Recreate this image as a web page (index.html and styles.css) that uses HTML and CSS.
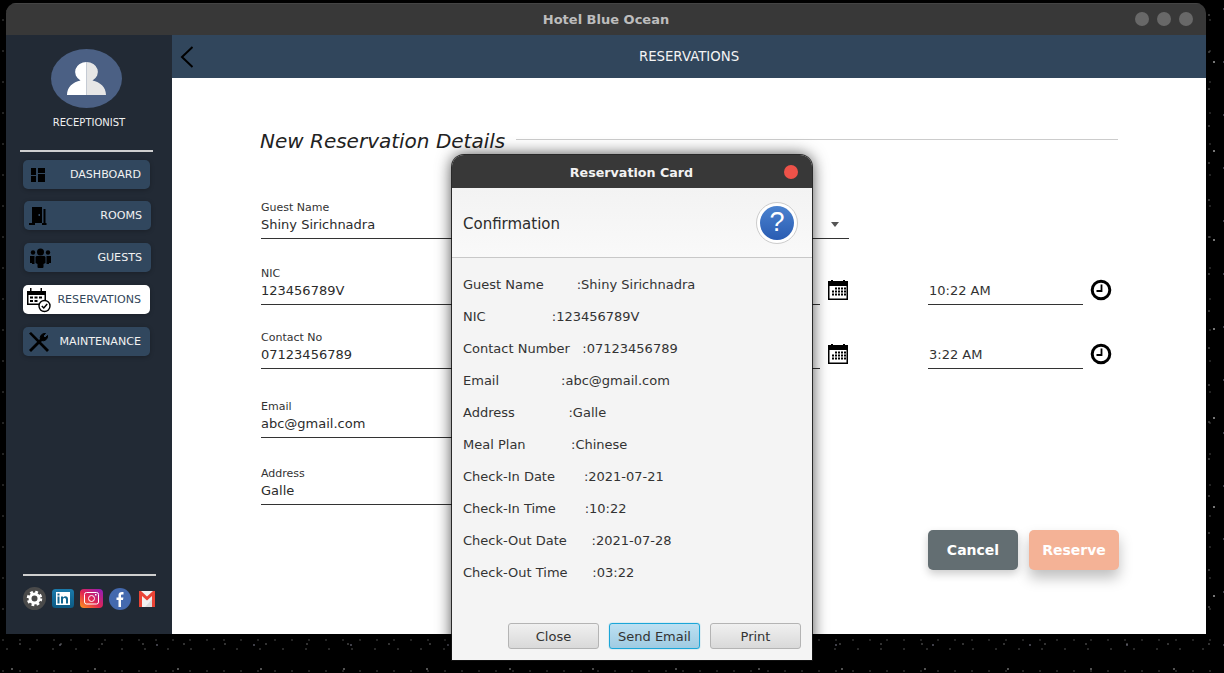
FILE: index.html
```html
<!doctype html>

<html>
  <head>
    <title>Hotel Blue Ocean</title>
    <link rel="stylesheet" href="styles.css">
  </head>

  <body>
    <div class="window">
      <div class="titlebar">
        <span class="titlebar-text">Hotel Blue Ocean</span>
        <div class="window-controls"><i></i><i></i><i></i></div>
      </div>

      <div class="app">
        <div class="sidebar">
          <svg class="avatar" viewBox="0 0 71 59">
            <ellipse cx="35.5" cy="29.5" rx="35.5" ry="29.5" fill="#4b6084"/>
            <path d="M35.500 13 a11.500 10 0 0 0 -6 18.500 C22 33 16 38 16 46 H35.500 Z" fill="#fff"/>
            <path d="M35.500 13 a11.500 10 0 0 1 6 18.500 C49 33 55 38 55 46 H35.500 Z" fill="#e6e6e6"/>
          </svg>
          <div class="role">RECEPTIONIST</div>
          <div class="side-rule"></div>

          <div class="nav">
            <div class="nav-item nav-dashboard">
              <svg width="16" height="16" viewBox="0 0 16 16"><path d="M1 1h5v7H1zM1 9h5v6H1zM8 1h7v5H8zM8 7h7v8H8z"/></svg>
              <span>DASHBOARD</span>
            </div>
            <div class="nav-item nav-shift">
              <svg width="18" height="20" viewBox="0 0 18 20"><path d="M3 1h10v16H3zM14.500 3h2v14h-2zM0 17h6v2H0zM13 17h4.500v2H13z"/><rect x="9.500" y="8" width="1.500" height="2" fill="#31475e"/></svg>
              <span>ROOMS</span>
            </div>
            <div class="nav-item nav-shift">
              <svg width="23" height="20" viewBox="0 0 23 20"><circle cx="11.500" cy="4" r="3.500"/><circle cx="4" cy="4.500" r="2.200"/><circle cx="19" cy="4.500" r="2.200"/><path d="M7.500 8h8l1 1v6l-2 1v3a1 1 0 0 1-1 1h-4a1 1 0 0 1-1-1v-3l-2-1V9zM1 8h4.500v8H3v-1H1zM17.500 8H22v7h-2v1h-2.500z"/></svg>
              <span>GUESTS</span>
            </div>
            <div class="nav-item nav-active">
              <svg width="24" height="26" viewBox="0 0 24 26">
                <path d="M0 4h3V1h1.500v3h9V1H15v3h4v14H0z"/>
                <path d="M1.500 8h16v8.500h-16z" fill="#fff"/>
                <path d="M3 9.500h3v2H3zM7.500 9.500h3v2h-3zM12 9.500h3v2h-3zM3 13h3v2H3zM7.500 13h3v2h-3z"/>
                <circle cx="17.500" cy="19" r="5.500" fill="#fff" stroke="#000" stroke-width="1.400"/>
                <path d="M14.800 19l2 2 3.400-4" fill="none" stroke="#000" stroke-width="1.500"/>
              </svg>
              <span>RESERVATIONS</span>
            </div>
            <div class="nav-item">
              <svg width="22" height="22" viewBox="0 0 22 22">
                <path d="M1 2.500l2-1.500 18 18-2 2z"/>
                <path d="M1 19l11.500-11.500 2 2L3 21z"/>
                <path d="M12.500 8.500a4.500 4.500 0 0 1 5-6l-2.500 2.500 2 2 2.500-2.500a4.500 4.500 0 0 1-6 5z" stroke="#000"/>
              </svg>
              <span>MAINTENANCE</span>
            </div>
          </div>

          <div class="side-foot">
            <div class="side-rule"></div>
            <div class="social">
              <svg width="23" height="23" viewBox="0 0 23 23">
                <circle cx="11.500" cy="11.500" r="11.500" fill="#4a4a4a"/>
                <circle cx="11.500" cy="11.500" r="4.500" fill="none" stroke="#fff" stroke-width="3"/>
                <circle cx="11.500" cy="11.500" r="6.500" fill="none" stroke="#fff" stroke-width="2.500" stroke-dasharray="2.700 2.400"/>
              </svg>
              <svg width="22" height="20" viewBox="0 0 22 20">
                <defs><linearGradient id="li" x1="0" y1="0" x2="0" y2="1"><stop offset="0" stop-color="#1b7bab"/><stop offset="1" stop-color="#0c5a84"/></linearGradient></defs>
                <rect width="22" height="19" rx="3.500" fill="url(#li)"/>
                <rect x="4" y="3" width="14" height="13" fill="#fff"/>
                <path d="M5.500 4.500h2v2h-2zM5.500 7.500h2v7h-2zM9 7.500h2v1c2-2 5-1.500 5 1.500v4.500h-2v-4c0-2-3-2-3 0v4H9z" fill="#12668f"/>
              </svg>
              <svg width="23" height="20" viewBox="0 0 23 20">
                <defs><linearGradient id="ig" x1="0" y1="1" x2="1" y2="0"><stop offset="0" stop-color="#fd9a1c"/><stop offset="0.45" stop-color="#e3264f"/><stop offset="1" stop-color="#8e1cc0"/></linearGradient></defs>
                <rect width="23" height="19" rx="4" fill="url(#ig)"/>
                <rect x="4.500" y="3.500" width="14" height="11.500" rx="2" fill="none" stroke="#fff"/>
                <circle cx="11.500" cy="9.500" r="3" fill="none" stroke="#fff"/>
                <rect x="15" y="5" width="1.500" height="1.500" fill="#fff"/>
              </svg>
              <svg class="social-fb" width="22" height="22" viewBox="0 0 22 22">
                <circle cx="11" cy="11" r="11" fill="#4469ae"/>
                <path d="M9.500 19v-7H7.500V9.500h2V7c0-2.500 2-3.500 5-3v2.500c-1.800-.3-2.500 0-2.500 1v2h2.400l-.4 2.500h-2v7z" fill="#fff"/>
              </svg>
              <svg width="16" height="16" viewBox="0 0 16 16">
                <rect width="16" height="16" fill="#f1f1f1"/>
                <path d="M16 5v11H6z" fill="#dcdcdc"/>
                <path d="M0 0h2l6 5.500L14 0h2v16h-3V5L8 9.500 3 5v11H0z" fill="#ea4335"/>
              </svg>
            </div>
          </div>
        </div>

        <div class="content">
          <div class="header">
            <svg class="back" width="14" height="22" viewBox="0 0 14 22"><path d="M12.500 1L2 11l10.500 10" fill="none" stroke="#000" stroke-width="2"/></svg>
            <span>RESERVATIONS</span>
          </div>

          <div class="main">
            <div class="section-title">
              <h2>New Reservation Details</h2>
              <div class="section-line"></div>
            </div>

            <div class="form-row">
              <div class="field"><label>Guest Name</label><div class="value">Shiny Sirichnadra</div></div>
              <div class="combo"><b class="arrow"></b></div>
            </div>

            <div class="form-row row-nic">
              <div class="field"><label>NIC</label><div class="value">123456789V</div></div>
              <div class="date-line"></div>
              <svg class="calendar" width="20" height="20" viewBox="0 0 20 20"><path d="M0 1h3V0h2v1h10V0h2v1h3v19H0z"/><path d="M1.500 6h17v12.500h-17z" fill="#fff"/><path d="M7 7.500h2v2H7zM10 7.500h2v2h-2zM13 7.500h2v2h-2zM16 7.500h2v2h-2zM4 10.500h2v2H4zM7 10.500h2v2H7zM10 10.500h2v2h-2zM13 10.500h2v2h-2zM16 10.500h2v2h-2zM4 13.500h2v2H4zM7 13.500h2v2H7zM10 13.500h2v2h-2zM13 13.500h2v2h-2zM16 13.500h2v2h-2z"/></svg>
              <div class="time-field">10:22 AM</div>
              <svg class="clock" width="22" height="22" viewBox="0 0 22 22"><circle cx="11" cy="11" r="8.800" fill="#fff" stroke="#000" stroke-width="3"/><path d="M11.500 5.500v6.500H6.500" fill="none" stroke="#000" stroke-width="1.800"/></svg>
            </div>

            <div class="form-row row-contact">
              <div class="field"><label>Contact No</label><div class="value">07123456789</div></div>
              <div class="date-line"></div>
              <svg class="calendar" width="20" height="20" viewBox="0 0 20 20"><path d="M0 1h3V0h2v1h10V0h2v1h3v19H0z"/><path d="M1.500 6h17v12.500h-17z" fill="#fff"/><path d="M7 7.500h2v2H7zM10 7.500h2v2h-2zM13 7.500h2v2h-2zM16 7.500h2v2h-2zM4 10.500h2v2H4zM7 10.500h2v2H7zM10 10.500h2v2h-2zM13 10.500h2v2h-2zM16 10.500h2v2h-2zM4 13.500h2v2H4zM7 13.500h2v2H7zM10 13.500h2v2h-2zM13 13.500h2v2h-2zM16 13.500h2v2h-2z"/></svg>
              <div class="time-field">3:22 AM</div>
              <svg class="clock" width="22" height="22" viewBox="0 0 22 22"><circle cx="11" cy="11" r="8.800" fill="#fff" stroke="#000" stroke-width="3"/><path d="M11.500 5.500v6.500H6.500" fill="none" stroke="#000" stroke-width="1.800"/></svg>
            </div>

            <div class="form-row row-email">
              <div class="field"><label>Email</label><div class="value">abc@gmail.com</div></div>
            </div>

            <div class="form-row row-address">
              <div class="field"><label>Address</label><div class="value">Galle</div></div>
            </div>

            <div class="actions">
              <div class="btn btn-cancel">Cancel</div>
              <div class="btn btn-reserve">Reserve</div>
            </div>
          </div>
        </div>
      </div>
    </div>

    <!-- Confirmation dialog, floats over the main window. -->
    <div class="dialog">
      <div class="dialog-title">
        <span>Reservation Card</span>
        <i class="dialog-close"></i>
      </div>
      <div class="dialog-head">
        <span class="dialog-heading">Confirmation</span>
        <div class="help"><div class="help-inner">?</div></div>
      </div>
      <div class="dialog-body">
        <p>Guest Name        :Shiny Sirichnadra</p>
        <p>NIC                :123456789V</p>
        <p>Contact Number   :07123456789</p>
        <p>Email               :abc@gmail.com</p>
        <p>Address             :Galle</p>
        <p>Meal Plan           :Chinese</p>
        <p>Check-In Date       :2021-07-21</p>
        <p>Check-In Time       :10:22</p>
        <p>Check-Out Date      :2021-07-28</p>
        <p>Check-Out Time      :03:22</p>
      </div>
      <div class="dialog-buttons">
        <div class="dlg-btn">Close</div>
        <div class="dlg-btn dlg-btn-focus">Send Email</div>
        <div class="dlg-btn">Print</div>
      </div>
    </div>
  </body>
</html>
```

FILE: styles.css
```css
* { margin: 0; padding: 0; box-sizing: border-box; }
html, body {
  overflow: hidden;
  width: 100%;
  height: 100%;
  font-family: "DejaVu Sans", sans-serif;
  background-color: #000;
  background-image:
    radial-gradient(circle at 12px 30px, #8a8a8a 0.5px, transparent 1px),
    radial-gradient(circle at 60px 9px, #6a6a7a 0.5px, transparent 1px),
    radial-gradient(circle at 35px 62px, #c8c8c8 0.5px, transparent 1px),
    radial-gradient(circle at 20px 15px, #555 0.5px, transparent 1px),
    radial-gradient(circle at 7px 11px, #444 0.5px, transparent 1px),
    radial-gradient(circle at 3px 20px, #3c3c3c 0.5px, transparent 1px);
  background-size: 83px 71px, 97px 53px, 131px 89px, 41px 37px, 23px 29px, 17px 31px;
}

/* Main window */
.window {
  position: absolute;
  top: 3px; left: 6px;
  width: 1200px;
  height: 631px;
  display: flex;
  flex-direction: column;
  border-radius: 10px 10px 0 0;
  overflow: hidden;
}
.titlebar {
  height: 32px;
  flex: none;
  display: flex;
  align-items: center;
  justify-content: center;
  position: relative;
  background: #383838;
  border-top: 1px solid #444;
}
.titlebar-text {
  font-size: 13px;
  font-weight: bold;
  color: #bdbdbd;
}
.window-controls {
  position: absolute;
  top: 8px; right: 13px;
  display: flex;
  gap: 8px;
}
.window-controls i {
  width: 14px;
  height: 14px;
  border-radius: 50%;
  background: #686868;
}
.app {
  flex: 1;
  display: flex;
  min-height: 0;
}

/* Sidebar */
.sidebar {
  width: 166px;
  flex: none;
  display: flex;
  flex-direction: column;
  padding-top: 14px;
  background: #222a35;
}
.avatar {
  width: 71px;
  height: 59px;
  margin-left: 45px;
  flex: none;
}
.role {
  margin-top: 8px;
  font-size: 10px;
  line-height: 14px;
  text-align: center;
  color: #f0f0f0;
}
.side-rule {
  width: 133px;
  height: 2px;
  margin: 20px 0 0 14px;
  background: #cfcfcf;
}
.nav {
  display: flex;
  flex-direction: column;
  gap: 13px;
  margin: 8px 0 0 17px;
}
.nav-item {
  width: 127px;
  height: 29px;
  display: flex;
  align-items: center;
  justify-content: space-between;
  padding: 0 9px 0 5px;
  font-size: 11.100px;
  color: #f2f2f2;
  background: #31475e;
  border-radius: 5px;
  box-shadow: 0 1px 4px rgba(0, 0, 0, 0.25);
}
.nav-item svg { flex: none; }
.nav-dashboard { margin-bottom: -1px; padding-left: 7px; }
.nav-shift { margin-left: 1px; }
.nav-active {
  padding-left: 4px;
  background: #fff;
  color: #33475b;
}
.side-foot {
  margin-top: auto;
  padding-bottom: 24px;
}
.side-foot .side-rule { margin-left: 17px; }
.social {
  display: flex;
  align-items: center;
  height: 23px;
  margin: 11px 0 0 17px;
  gap: 6px;
}
.social-fb { margin-right: 2px; }

/* Content */
.content {
  flex: 1;
  display: flex;
  flex-direction: column;
  min-width: 0;
}
.header {
  height: 43px;
  flex: none;
  display: flex;
  align-items: center;
  justify-content: center;
  position: relative;
  font-size: 13.300px;
  color: #f4f4f4;
  background: #31465c;
}
.back {
  position: absolute;
  top: 11px; left: 8px;
}
.main {
  flex: 1;
  padding: 51px 87px 0 88px;
  background: #fff;
}
.section-title {
  display: flex;
  align-items: center;
  margin-right: 1px;
  gap: 11px;
  height: 24px;
}
.section-title h2 {
  font-size: 20px;
  font-weight: normal;
  font-style: italic;
  color: #222;
  white-space: nowrap;
}
.section-line {
  flex: 1;
  height: 1px;
  margin-bottom: 4px;
  background: #ccc;
}
.form-row {
  display: flex;
  align-items: flex-end;
  margin-top: 48px;
}
.row-nic { margin-top: 28px; }
.row-contact { margin-top: 26px; }
.row-email { margin-top: 31px; }
.row-address { margin-top: 29px; }
.field {
  width: 220px;
  height: 38px;
  flex: none;
  margin-left: 1px;
  border-bottom: 1px solid #333;
}
.field label {
  display: block;
  font-size: 11px;
  line-height: 13px;
  color: #333;
}
.value {
  font-size: 13px;
  line-height: 21px;
  color: #2b2b2b;
}
.combo {
  width: 309px;
  height: 38px;
  margin-left: 59px;
  flex: none;
  position: relative;
  border-bottom: 1px solid #333;
}
.arrow {
  position: absolute;
  right: 10px; bottom: 11px;
  border-style: solid;
  border-width: 5px 4.500px 0;
  border-color: #555 transparent transparent;
}
.date-line {
  width: 280px;
  height: 1px;
  margin-left: 59px;
  background: #333;
}
.calendar {
  margin: 0 0 5px 8px;
  flex: none;
}
.time-field {
  width: 155px;
  margin-left: 80px;
  padding-left: 1px;
  font-size: 13px;
  line-height: 27px;
  color: #333;
  border-bottom: 1px solid #333;
}
.clock {
  margin: 0 0 4px 7px;
  flex: none;
}
.actions {
  display: flex;
  justify-content: flex-end;
  gap: 11px;
  margin-top: 25px;
}
.btn {
  width: 90px;
  height: 40px;
  display: flex;
  align-items: center;
  justify-content: center;
  font-size: 14px;
  font-weight: bold;
  color: #fff;
  border-radius: 5px;
}
.btn-cancel {
  background: #636e72;
  box-shadow: 0 4px 8px rgba(0, 0, 0, 0.2);
}
.btn-reserve {
  background: #f4b296;
  box-shadow: 0 8px 14px rgba(0, 0, 0, 0.25);
}

/* Dialog */
.dialog {
  position: absolute;
  top: 155px; left: 452px;
  width: 360px;
  height: 505px;
  display: flex;
  flex-direction: column;
  background: #f4f4f4;
  border-radius: 12px 12px 0 0;
  box-shadow: 0 0 0 1px rgba(20, 20, 20, 0.85), 0 0 16px rgba(0, 0, 0, 0.75);
}
.dialog-title {
  height: 33px;
  flex: none;
  display: flex;
  align-items: center;
  justify-content: center;
  position: relative;
  padding: 1px 1px 0 0;
  font-size: 12.700px;
  font-weight: bold;
  color: #f2f2f2;
  background: #383838;
  border-radius: 12px 12px 0 0;
}
.dialog-close {
  position: absolute;
  top: 10px; right: 14px;
  width: 14px;
  height: 14px;
  border-radius: 50%;
  background: #ed5249;
}
.dialog-head {
  height: 70px;
  flex: none;
  display: flex;
  align-items: center;
  justify-content: space-between;
  padding: 0 14px 0 11px;
  background: linear-gradient(to bottom, #f3f3f3, #f9f9f9);
  border-bottom: 1px solid #c8c8c8;
}
.dialog-heading {
  padding-top: 2px;
  font-size: 15px;
  color: #2c2c2c;
}
.help {
  width: 42px;
  height: 42px;
  display: flex;
  align-items: center;
  justify-content: center;
  background: #fff;
  border: 1px solid #ccc;
  border-radius: 50%;
}
.help-inner {
  width: 34px;
  height: 34px;
  display: flex;
  align-items: center;
  justify-content: center;
  font-family: "Liberation Sans", sans-serif;
  font-size: 27px;
  color: #fff;
  background: linear-gradient(to bottom, #4a82cf, #2a5cb2);
  border-radius: 50%;
}
.dialog-body {
  flex: 1;
  padding: 18px 0 0 11px;
}
.dialog-body p {
  height: 32px;
  font-size: 13px;
  line-height: 18px;
  color: #333;
  white-space: pre;
}
.dialog-buttons {
  display: flex;
  gap: 10px;
  justify-content: flex-end;
  padding: 0 11px 11px 0;
}
.dlg-btn {
  width: 91px;
  height: 26px;
  display: flex;
  align-items: center;
  justify-content: center;
  font-size: 13px;
  color: #333;
  background: linear-gradient(to bottom, #f0f0f0, #d9d9d9);
  border: 1px solid #b4b4b4;
  border-radius: 3px;
}
.dlg-btn-focus {
  background: linear-gradient(to bottom, #bde0f2, #9fcbe2);
  border-color: #1ba6d8;
  box-shadow: 0 0 1px #1ba6d8;
}
```
